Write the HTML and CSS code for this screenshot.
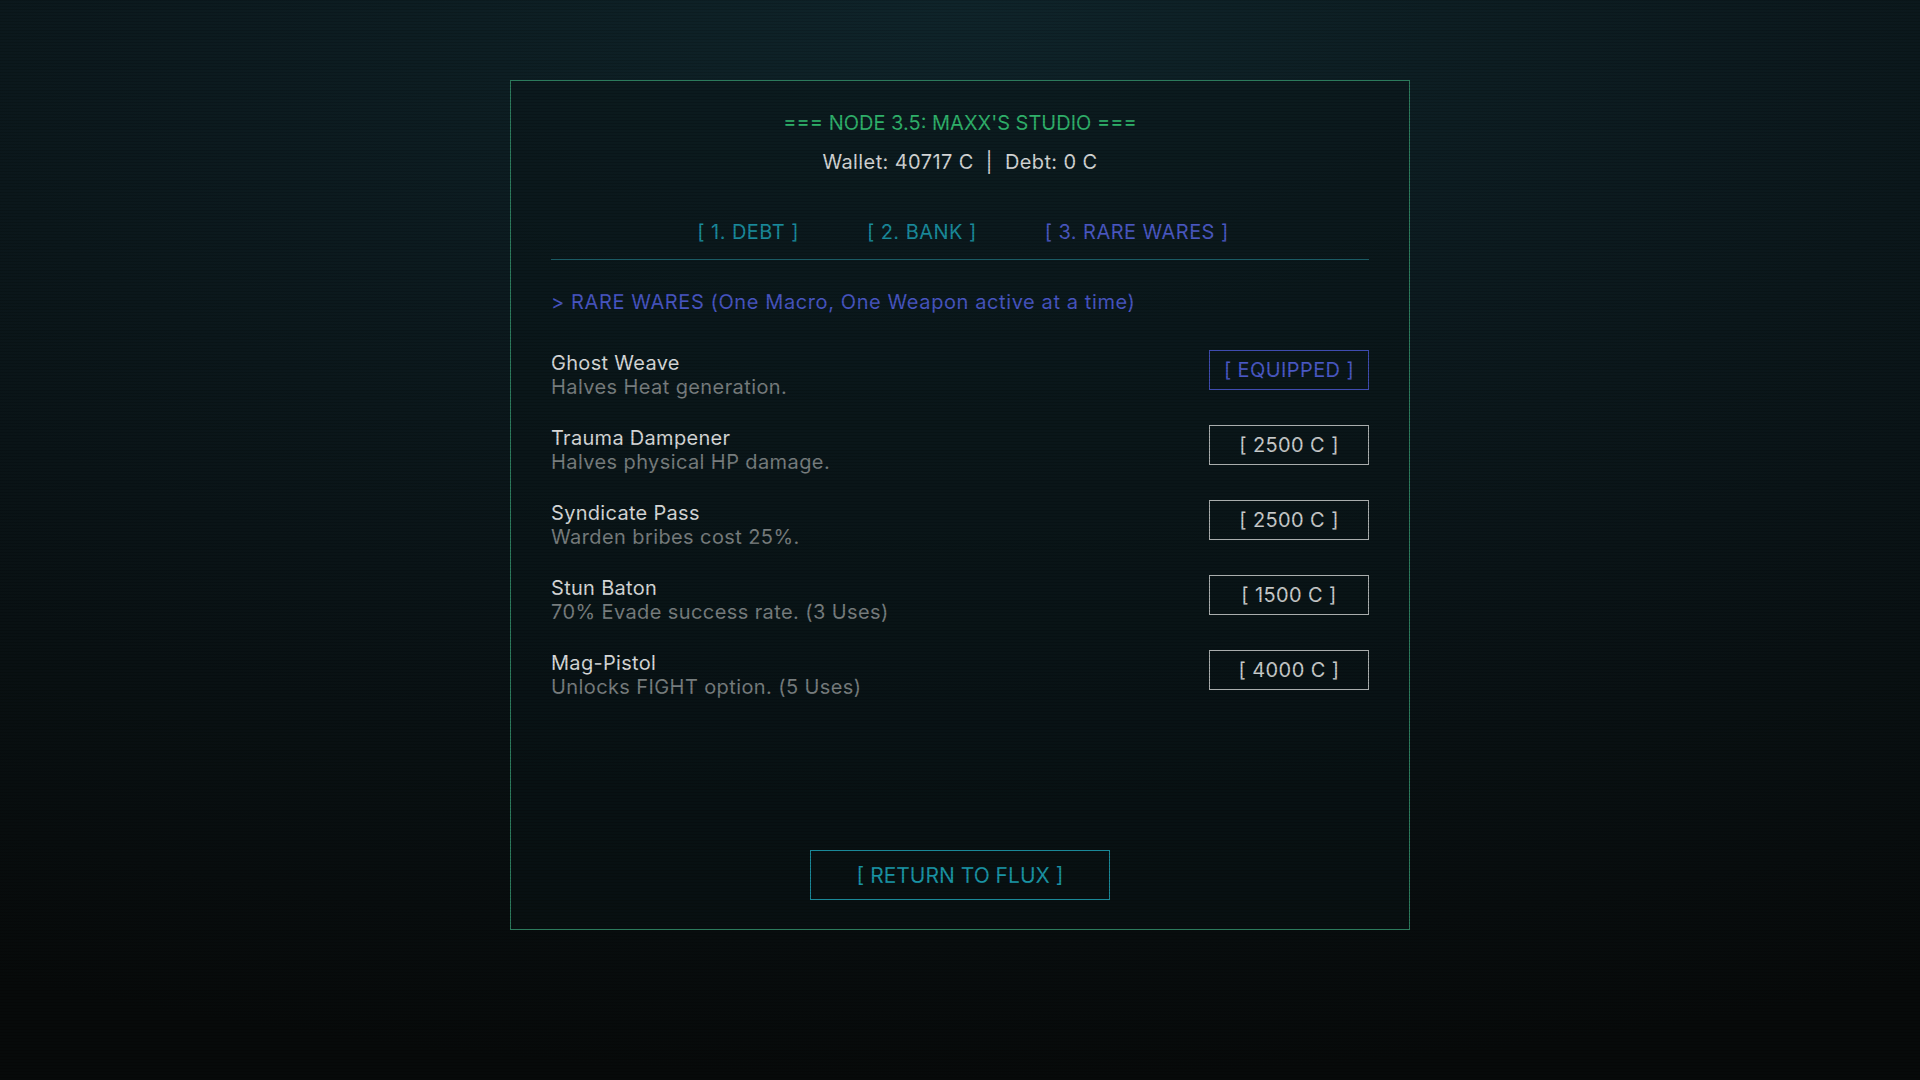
FILE: index.html
```html
<!DOCTYPE html>
<html lang="en">
<head>
<meta charset="utf-8">
<title>Node 3.5: Maxx's Studio</title>
<link rel="stylesheet" href="styles.css">
</head>
<body>
<main class="screen">
  <section class="panel">
    <h1 class="title">=== NODE 3.5: MAXX'S STUDIO ===</h1>
    <p class="stats">Wallet: 40717 C &nbsp;|&nbsp; Debt: 0 C</p>
    <nav class="tabs">
      <button class="tab">[ 1. DEBT ]</button>
      <button class="tab">[ 2. BANK ]</button>
      <button class="tab tab-active">[ 3. RARE WARES ]</button>
    </nav>
    <h2 class="section-title">&gt; RARE WARES (One Macro, One Weapon active at a time)</h2>
    <ul class="wares">
      <li class="ware">
        <div class="ware-info">
          <span class="ware-name">Ghost Weave</span>
          <span class="ware-desc">Halves Heat generation.</span>
        </div>
        <button class="buy buy-equipped">[ EQUIPPED ]</button>
      </li>
      <li class="ware">
        <div class="ware-info">
          <span class="ware-name">Trauma Dampener</span>
          <span class="ware-desc">Halves physical HP damage.</span>
        </div>
        <button class="buy">[ 2500 C ]</button>
      </li>
      <li class="ware">
        <div class="ware-info">
          <span class="ware-name">Syndicate Pass</span>
          <span class="ware-desc">Warden bribes cost 25%.</span>
        </div>
        <button class="buy">[ 2500 C ]</button>
      </li>
      <li class="ware">
        <div class="ware-info">
          <span class="ware-name">Stun Baton</span>
          <span class="ware-desc">70% Evade success rate. (3 Uses)</span>
        </div>
        <button class="buy">[ 1500 C ]</button>
      </li>
      <li class="ware">
        <div class="ware-info">
          <span class="ware-name">Mag-Pistol</span>
          <span class="ware-desc">Unlocks FIGHT option. (5 Uses)</span>
        </div>
        <button class="buy">[ 4000 C ]</button>
      </li>
    </ul>
    <button class="return">[ RETURN TO FLUX ]</button>
  </section>
</main>
</body>
</html>
```
FILE: styles.css
```css
* {
  box-sizing: border-box;
}

html, body {
  margin: 0;
  padding: 0;
  height: 100%;
}

body {
  font-family: Inter, "Noto Sans", "Liberation Sans", sans-serif;
  color: #d4d6d6;
  background: radial-gradient(ellipse 120% 100% at 50% 0%, #0f242a 0%, #0b171b 45%, #070a0a 100%);
  overflow: hidden;
}

body::after {
  content: "";
  position: fixed;
  inset: 0;
  pointer-events: none;
  background: repeating-linear-gradient(to bottom, rgba(0, 0, 0, 0.12) 0px, rgba(0, 0, 0, 0.12) 1px, transparent 1px, transparent 3px);
}

.screen {
  height: 100%;
  display: flex;
  justify-content: center;
  padding-top: 80px;
}

.panel {
  width: 900px;
  height: 850px;
  border: 1px solid #2c7a5c;
  background: rgba(8, 20, 23, 0.45);
  padding: 30px 40px 29px;
  display: flex;
  flex-direction: column;
}

.title {
  margin: 0;
  font-size: 20px;
  line-height: 24px;
  font-weight: 400;
  color: #2fb06a;
  text-align: center;
}

.stats {
  margin: 15px 0 0;
  font-size: 20px;
  line-height: 24px;
  letter-spacing: 0.4px;
  color: #d2d4d4;
  text-align: center;
}

.tabs {
  margin-top: 46px;
  display: flex;
  justify-content: center;
  gap: 68px;
  padding: 0 0 15px 6px;
  border-bottom: 1px solid #1b5a64;
}

.tab {
  font: inherit;
  font-size: 20px;
  line-height: 24px;
  letter-spacing: 0.45px;
  background: none;
  border: 0;
  padding: 0;
  color: #1a8b9c;
  cursor: pointer;
}

.tab-active {
  color: #4a58c2;
}

.section-title {
  margin: 30px 0 0;
  font-size: 20px;
  line-height: 24px;
  letter-spacing: 0.6px;
  font-weight: 400;
  color: #4755c0;
}

.wares {
  list-style: none;
  margin: 36px 0 0;
  padding: 0;
  display: flex;
  flex-direction: column;
  gap: 27px;
}

.ware {
  display: flex;
  justify-content: space-between;
  align-items: flex-start;
}

.ware-info {
  display: flex;
  flex-direction: column;
}

.ware-name {
  font-size: 20px;
  line-height: 26px;
  letter-spacing: 0.3px;
  color: #d6d8d8;
}

.ware-desc {
  font-size: 20px;
  line-height: 22px;
  letter-spacing: 0.4px;
  color: #777d7e;
}

.buy {
  font: inherit;
  font-size: 20px;
  letter-spacing: 0.4px;
  width: 160px;
  height: 40px;
  background: transparent;
  border: 1px solid #a9adad;
  color: #c9cccc;
  cursor: pointer;
}

.buy-equipped {
  border-color: #3f4cb0;
  color: #4a59c6;
}

.return {
  margin: auto auto 0;
  width: 300px;
  height: 50px;
  font: inherit;
  font-size: 21px;
  background: transparent;
  border: 1px solid #1a8898;
  color: #1a93a4;
  cursor: pointer;
}
```
